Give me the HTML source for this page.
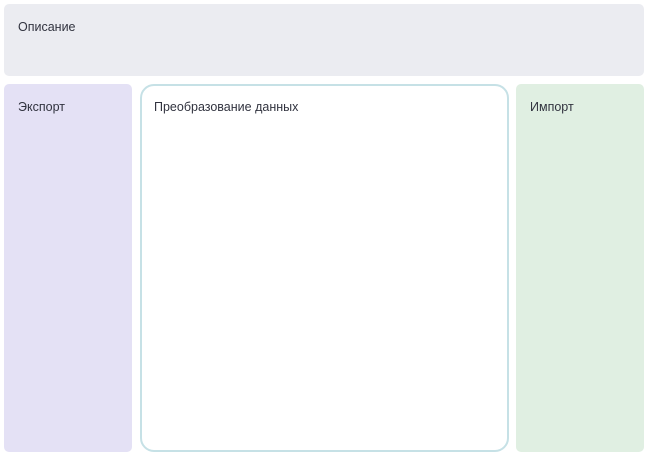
<!DOCTYPE html>
<html><head><meta charset="utf-8"><style>
html,body{margin:0;padding:0;background:#fff;width:647px;height:454px;overflow:hidden;font-family:"Liberation Sans","DejaVu Sans",sans-serif;font-size:12.5px;color:#31333f}
.b{position:absolute;box-sizing:border-box;padding:16px 14px}
</style></head><body>
<div class="b" style="left:4px;top:4px;width:640px;height:72px;background:#ebecf1;border-radius:5px">Описание</div>
<div class="b" style="left:4px;top:84px;width:128px;height:368px;background:#e4e1f5;border-radius:5px">Экспорт</div>
<div class="b" style="left:140px;top:84px;width:369px;height:368px;background:#fff;border:2px solid #c6e1e6;border-radius:14px;padding:14px 12px">Преобразование данных</div>
<div class="b" style="left:516px;top:84px;width:128px;height:368px;background:#e0efe2;border-radius:5px">Импорт</div>
</body></html>
